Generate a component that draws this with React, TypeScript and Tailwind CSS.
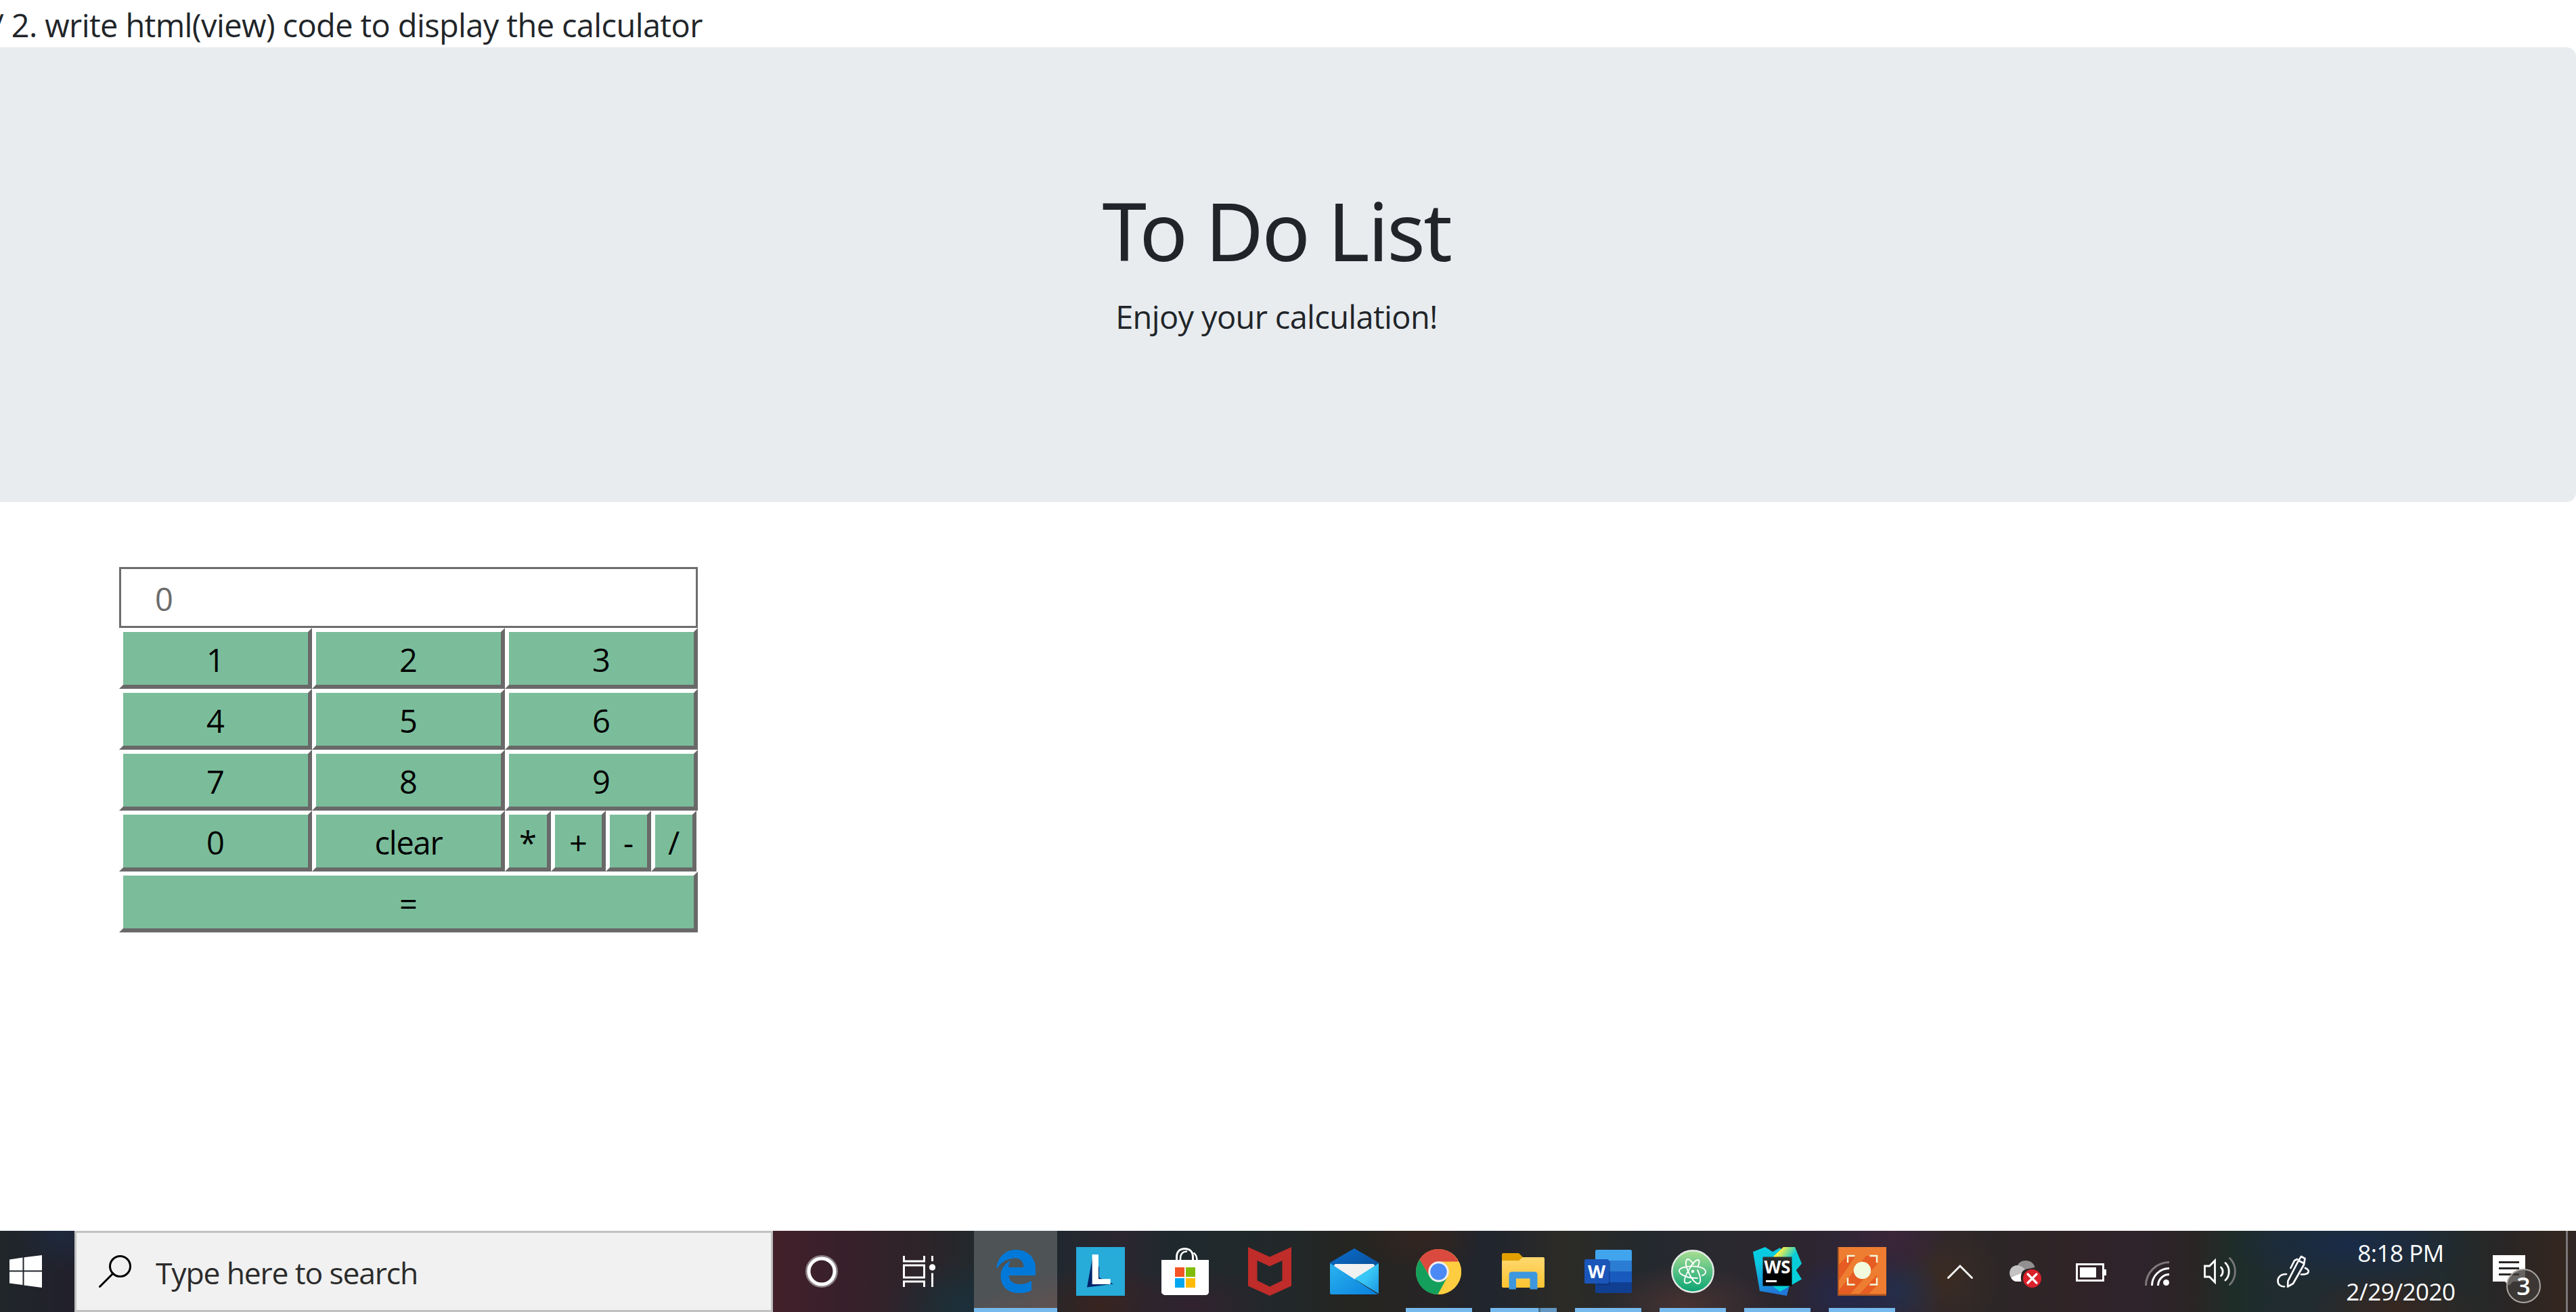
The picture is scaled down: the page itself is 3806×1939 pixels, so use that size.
import type { ReactNode } from "react";

const keyBase =
  "flex h-[90px] items-center justify-center border-[6px] border-t-white border-l-white border-r-[#696969] border-b-[#696969] bg-[#7bbd9b] pt-[4px] text-[47px] leading-none text-black";

function Key({ label, className = "" }: { label: string; className?: string }) {
  return (
    <button type="button" className={`${keyBase} ${className}`}>
      {label}
    </button>
  );
}

function Calculator() {
  return (
    <div className="ml-[176px] mt-24 w-[855px]">
      <div className="flex h-[90px] items-center border-[3px] border-[#6d6d6d] bg-white pl-[50px] pt-[5px] text-[47px] leading-none text-[#6b6b6b]">
        0
      </div>
      <div className="grid grid-cols-3">
        {["1", "2", "3", "4", "5", "6", "7", "8", "9", "0"].map((n) => (
          <Key key={n} label={n} />
        ))}
        <Key label="clear" className="tracking-[-1.2px]" />
        <div className="flex">
          <Key label="*" className="w-[68px]" />
          <Key label="+" className="w-[81px]" />
          <Key label="-" className="w-[67px]" />
          <Key label="/" className="w-[67px]" />
        </div>
      </div>
      <Key label="=" className="w-full" />
    </div>
  );
}

function EdgeIcon() {
  return (
    <svg width="58" height="64" viewBox="0 0 58 64">
      <path
        fill="#0279d9"
        d="M0 28.500C2 11 13 0 29 0C46 0 58 12 58 27V38H18.500C19 46 25 51 35 51C41 51 47 49 52 46V60C46 63 40 64.500 33 64C16 64 6.500 53 6.500 39C6.500 29 12 20 22 16C19 19 18 23 18 26H40.500C40 17 36 12.500 28 12.500C17 12.500 7 18 0 28.500Z"
      />
    </svg>
  );
}

function LenovoIcon() {
  return (
    <svg className="overflow-visible" width="72" height="72" viewBox="0 0 72 72">
      <rect width="72" height="72" fill="#27abd9" />
      <path d="M25 11L34 30V45L55 54.500L16 59.500Z" fill="#00246b" />
      <text x="18.300" y="54.500" fontFamily="Open Sans" fontWeight="700" fontSize="61" fill="#fff">
        L
      </text>
    </svg>
  );
}

function StoreIcon() {
  return (
    <svg width="70" height="70" viewBox="0 0 70 70">
      <g fill="none" stroke="#fff">
        <path strokeWidth="3" d="M22.500 19V14C22.500 6 27 1.500 34.500 1.500C42 1.500 46.500 6 46.500 14V19" />
        <path strokeWidth="2.500" d="M28 19V16C28 9 32 5 38 5.500M47.500 7.500C51 10 52.500 14 52.500 19" />
      </g>
      <path fill="#fff" d="M0 18H70V66Q69 70 65 70H5Q1 69 0 66Z" />
      <rect x="20" y="29" width="14" height="14" fill="#f35325" />
      <rect x="36" y="29" width="14" height="14" fill="#81bc06" />
      <rect x="20" y="45" width="14" height="14" fill="#05a6f0" />
      <rect x="36" y="45" width="14" height="14" fill="#ffba08" />
    </svg>
  );
}

function McAfeeIcon() {
  return (
    <svg width="64" height="72" viewBox="0 0 64 72">
      <path
        fill="#bf2c29"
        fillRule="evenodd"
        d="M0 0L32 14.500L64 0V57.500L32 72L0 57.500ZM13.500 20V49.500L32 58.500L50.500 49.500V20L32 28.500Z"
      />
    </svg>
  );
}

function MailIcon() {
  return (
    <svg width="72" height="68" viewBox="0 0 72 68">
      <defs>
        <linearGradient id="mailTop" x1="0" x2="1" y1="0" y2="1">
          <stop offset="0" stopColor="#0a6fd0" />
          <stop offset="1" stopColor="#0a4d94" />
        </linearGradient>
        <linearGradient id="mailBody" x1="0" x2="1" y1="0" y2="1">
          <stop offset="0" stopColor="#2ab4f0" />
          <stop offset="1" stopColor="#0a80dc" />
        </linearGradient>
        <linearGradient id="mailRight" x1="0" x2="1" y1="0" y2="1">
          <stop offset="0" stopColor="#3fd2fb" />
          <stop offset="0.500" stopColor="#36c4f5" />
          <stop offset="1" stopColor="#1b94e2" />
        </linearGradient>
      </defs>
      <path fill="url(#mailTop)" d="M0 21L36 0L72 21V32H0Z" />
      <path fill="#f1f1f1" d="M6 26Q6 23 9 23H63Q66 23 66 26L40 46H32Z" />
      <path fill="url(#mailRight)" d="M72 22V67L36 45Z" />
      <path fill="url(#mailBody)" d="M0 22L71 68H2Q0 68 0 66Z" />
    </svg>
  );
}

function ChromeIcon() {
  return (
    <svg width="67" height="67" viewBox="0 0 67 67">
      <circle cx="33.500" cy="33.500" r="33.500" fill="#ffcd40" />
      <path fill="#db4a3f" d="M5 16C11 6 21 0 33.500 0C46 0 57 7 63 18.500H33.500L19 38Z" />
      <path fill="#14a05c" d="M5.500 15.500C2 21 0 27 0 33.500C0 52 14 67 32.500 67L46 42L20 40Z" />
      <path fill="#ffcd40" d="M32.500 67L47.500 41L47 19H63.500C66 24 67 28 67 33.500C67 52 52 67 32.500 67Z" />
      <circle cx="33.500" cy="33.500" r="15.200" fill="#f1f1f1" />
      <circle cx="33.500" cy="33.500" r="12.200" fill="#4b8af4" />
    </svg>
  );
}

function FolderIcon() {
  return (
    <svg width="63" height="54" viewBox="0 0 63 54">
      <defs>
        <linearGradient id="folder" x1="0" x2="0" y1="0" y2="1">
          <stop offset="0" stopColor="#ffd86f" />
          <stop offset="1" stopColor="#fdc431" />
        </linearGradient>
      </defs>
      <path fill="#e0a000" d="M0 2Q0 0 2 0H25L31 6V14H0Z" />
      <path fill="url(#folder)" d="M0 11H25L31 6H61Q63 6 63 8V49Q63 51 61 51H2Q0 51 0 49Z" />
      <path fill="#3c97de" d="M10.500 53.500V32Q10.500 27.500 15 27.500H48Q52.500 27.500 52.500 32V53.500H41.500V37.500H21V53.500Z" />
    </svg>
  );
}

function WordIcon() {
  return (
    <svg width="70" height="64" viewBox="0 0 70 64">
      <rect x="16" y="0" width="54" height="64" rx="2.500" fill="#103f91" />
      <path fill="#41a5ee" d="M16 16V2.500Q16 0 18.500 0H67.500Q70 0 70 2.500V16Z" />
      <rect x="16" y="16" width="54" height="16" fill="#2b7cd3" />
      <rect x="16" y="32" width="54" height="16" fill="#185abd" />
      <rect x="18" y="16" width="20" height="37" rx="3" fill="#0b2f70" opacity="0.450" />
      <rect x="0" y="14" width="36" height="36" rx="2.500" fill="#1a55ba" />
      <text x="18" y="41.500" textAnchor="middle" fontFamily="Open Sans" fontWeight="700" fontSize="27" fill="#fff">
        W
      </text>
    </svg>
  );
}

function AtomIcon() {
  return (
    <svg width="64" height="64" viewBox="0 0 64 64">
      <defs>
        <linearGradient id="atom" x1="0" x2="0" y1="0" y2="1">
          <stop offset="0" stopColor="#a9de94" />
          <stop offset="1" stopColor="#08a473" />
        </linearGradient>
      </defs>
      <circle cx="32" cy="32" r="30.700" fill="url(#atom)" stroke="#e6ebe7" strokeWidth="2.400" />
      <g fill="none" stroke="#fff" strokeWidth="1.900" strokeLinecap="round">
        <path d="M39 42C24 42 12 37 12 31C12 23 49 21 51 32C51.500 35 49 37 46 38" />
        <path d="M29 47C26 50 22 50 20 48C18 42 33 14 40 15C43 16 41 21 40 24" />
        <path d="M39 30C45 42 44 50 40 50C32 50 18 22 23 15C26 12 30 17 33 21" />
      </g>
      <circle cx="32" cy="32" r="2.200" fill="#fff" />
    </svg>
  );
}

function WebStormIcon() {
  return (
    <svg width="72" height="72" viewBox="0 0 72 72">
      <defs>
        <linearGradient id="wsA" x1="0" x2="0.300" y1="0" y2="1">
          <stop offset="0" stopColor="#06cfe2" />
          <stop offset="0.350" stopColor="#0bc8e0" />
          <stop offset="1" stopColor="#2078d8" />
        </linearGradient>
        <linearGradient id="wsB" x1="0" x2="1" y1="0.200" y2="0.800">
          <stop offset="0.150" stopColor="#fff045" />
          <stop offset="0.600" stopColor="#08cdd9" />
        </linearGradient>
        <linearGradient id="wsK" x1="0" x2="0" y1="0" y2="1">
          <stop offset="0" stopColor="#333" />
          <stop offset="0.600" stopColor="#000" />
        </linearGradient>
      </defs>
      <path fill="url(#wsA)" d="M0 7L18 0L29 7L40 1L53 14L54 56L50 72L10 65Z" />
      <path fill="#04cfd9" d="M56 14L63 33L72 47.500L40 66L28 57Z" />
      <path fill="url(#wsB)" d="M30 14L45 0H62L72 24.500L63 35L50 30Z" />
      <rect x="14.500" y="14.500" width="43" height="43" fill="url(#wsK)" />
      <text x="36" y="38.500" textAnchor="middle" textLength="39" lengthAdjust="spacingAndGlyphs" fontFamily="Open Sans" fontWeight="700" fontSize="27" fill="#fff">
        WS
      </text>
      <rect x="19" y="49" width="16" height="3" fill="#fff" />
    </svg>
  );
}

function CaptureIcon() {
  return (
    <svg width="72" height="72" viewBox="0 0 72 72">
      <rect width="72" height="72" fill="#ee7d31" />
      <path fill="#e65c22" d="M2 26L14 13H27L2 49ZM42 13H58V26L19 69H2V64ZM33 69L58 41V57L46 69Z" />
      <path fill="#aa5420" d="M0 0H2V69.500H72V72H0Z" />
      <path fill="none" stroke="#f3fadc" strokeWidth="2.400" d="M15 23V13H25.500M47.500 13H58V23M58 45.500V55.500H47.500M25.500 55.500H15V45.500" />
      <circle cx="36.500" cy="34.500" r="12.700" fill="#f1fadd" />
    </svg>
  );
}

function TaskItem({
  children,
  active = false,
  open = false,
  split = false,
}: {
  children: ReactNode;
  active?: boolean;
  open?: boolean;
  split?: boolean;
}) {
  return (
    <div className={`mr-[2px] flex h-[120px] w-[123px] flex-col items-center ${active ? "bg-[linear-gradient(160deg,#4e5356_60%,#625150)]" : ""}`}>
      <div className="flex h-[114px] items-center justify-center pt-[6px]">{children}</div>
      {active && <div className="h-[6px] w-full bg-[#76b9ed]" />}
      {open && !split && <div className="h-[6px] w-[98px] bg-[#76b9ed]" />}
      {split && (
        <div className="flex h-[6px] w-[98px]">
          <div className="w-[71px] bg-[#76b9ed]" />
          <div className="w-[3px] bg-[#47708c]" />
          <div className="w-[24px] bg-[#6197c2]" />
        </div>
      )}
    </div>
  );
}

function Taskbar() {
  return (
    <div className="flex h-[120px] bg-[radial-gradient(ellipse_70px_60px_at_90px_0px,#1d2a3d,transparent),radial-gradient(ellipse_120px_70px_at_1430px_110px,#1b303b,transparent),radial-gradient(ellipse_120px_60px_at_1760px_110px,#32222e,transparent),radial-gradient(ellipse_110px_60px_at_1625px_110px,#38241f,transparent),radial-gradient(ellipse_90px_50px_at_2100px_10px,#33241f,transparent),radial-gradient(ellipse_130px_60px_at_2490px_110px,#483232,transparent),radial-gradient(ellipse_90px_60px_at_2730px_95px,#23284c,transparent),radial-gradient(ellipse_80px_60px_at_2795px_10px,#3b2538,transparent),radial-gradient(ellipse_70px_60px_at_2800px_90px,#242f48,transparent),radial-gradient(ellipse_80px_90px_at_2875px_70px,#3b2c22,transparent),radial-gradient(ellipse_180px_60px_at_3470px_20px,#192b47,transparent),radial-gradient(ellipse_130px_50px_at_3540px_115px,#38271f,transparent),linear-gradient(90deg,#20262a_0px,#22202c_110px,#42202a_1142px,#38202b_1240px,#2c2429_1370px,#22292c_1440px,#20282f_1562px,#2c2630_1660px,#1f292d_1730px,#22282a_1900px,#252521_2000px,#272526_2120px,#20252e_2200px,#2c2b26_2310px,#24292e_2430px,#2a292f_2550px,#2c262e_2640px,#30253a_2780px,#2c2728_2930px,#302427_3050px,#2f232c_3150px,#2a2525_3240px,#1e2d28_3300px,#202c30_3360px,#222b33_3540px,#222b2c_3620px,#292626_3700px,#33261f_3780px,#302624_3806px)]">
      <div className="flex w-[110px] items-center pl-[14px]">
        <svg width="48" height="48" viewBox="0 0 48 48" fill="#fff">
          <path d="M0 6.500L19.500 3.500V22.500H0ZM21.500 3.200L48 0V22.500H21.500ZM0 24.500H19.500V44L0 41.500ZM21.500 24.500H48V48L21.500 44.500Z" />
        </svg>
      </div>
      <div className="flex w-[1032px] items-center border-[3px] border-[#c1c1c1] bg-[#f1f1f1] pl-[33px]">
        <svg width="48" height="48" viewBox="0 0 48 48" fill="none" stroke="#000" strokeWidth="3">
          <circle cx="31.500" cy="16.500" r="15" />
          <path d="M21 27L1.500 46.500" strokeLinecap="round" />
        </svg>
        <span className="ml-[36px] pt-[5px] text-[44.500px] leading-none tracking-[-1.180px] text-[#2b2b2b]">Type here to search</span>
      </div>
      <div className="flex w-[297px] items-center pl-12">
        <svg width="48" height="48" viewBox="0 0 48 48" fill="none">
          <circle cx="24" cy="24" r="22.500" stroke="#8e8388" strokeWidth="3" />
          <circle cx="24" cy="24" r="19" stroke="#fff" strokeWidth="5" />
        </svg>
        <svg className="ml-24" width="48" height="46" viewBox="0 0 48 46" fill="none" stroke="#fff" strokeWidth="3">
          <path d="M1.500 0V8H31.500V0M1.500 46V38H31.500V46M1.500 14H31.500V32H1.500ZM43.500 0V8M43.500 25.500V46" />
          <circle cx="43.500" cy="17" r="4.700" fill="#fff" stroke="none" />
        </svg>
      </div>
      <TaskItem active><EdgeIcon /></TaskItem>
      <TaskItem><LenovoIcon /></TaskItem>
      <TaskItem><StoreIcon /></TaskItem>
      <TaskItem><McAfeeIcon /></TaskItem>
      <TaskItem><MailIcon /></TaskItem>
      <TaskItem open><ChromeIcon /></TaskItem>
      <TaskItem split><FolderIcon /></TaskItem>
      <TaskItem open><WordIcon /></TaskItem>
      <TaskItem open><AtomIcon /></TaskItem>
      <TaskItem open><WebStormIcon /></TaskItem>
      <TaskItem open><CaptureIcon /></TaskItem>
      <div className="ml-[63px] flex w-[535px] items-center">
        <svg width="38" height="21" viewBox="0 0 38 21" fill="none" stroke="#fff" strokeWidth="2.800" strokeLinecap="round">
          <path d="M1.500 19.500L19 2L36.500 19.500" />
        </svg>
        <svg className="mt-2 ml-[53px]" width="48" height="40" viewBox="0 0 48 40">
          <path fill="#929090" d="M12 9C14 3 19 0 25 0C32 0 37 4 38.500 10L20 14Z" />
          <path fill="#c3c3c3" d="M3 25C-2 16 4 7 12 7C18 7 22 11 24 13C20 15 18 20 18 20Z" />
          <path fill="#fff" d="M3 25L19 18.500C17.500 22 17.500 27 18.500 31H12C8 31 5 29 3 25Z" />
          <circle cx="34.500" cy="26.500" r="13.500" fill="#da202b" />
          <path d="M28 20L41 33M41 20L28 33" stroke="#fff" strokeWidth="3.200" strokeLinecap="round" />
        </svg>
        <svg className="mt-[3px] ml-[51px]" width="45" height="27" viewBox="0 0 45 27">
          <rect x="1.500" y="1.500" width="39" height="24" fill="none" stroke="#fff" strokeWidth="3" />
          <rect x="6" y="6" width="24" height="15" fill="#fff" />
          <rect x="42" y="9" width="3" height="9" fill="#fff" />
        </svg>
        <svg className="mt-[6px] ml-[57px]" width="36" height="36" viewBox="0 0 36 36" fill="none" stroke="#fff" strokeWidth="3">
          <path d="M1.500 36A34.500 34.500 0 0 1 36 1.500" stroke="#7f787b" />
          <path d="M10.500 36A25.500 25.500 0 0 1 36 10.500M19.500 36A16.500 16.500 0 0 1 36 19.500" />
          <circle cx="31.500" cy="31.500" r="4.500" fill="#fff" stroke="none" />
        </svg>
        <svg className="ml-[51px]" width="48" height="42" viewBox="0 0 48 42" fill="none" stroke="#fff" strokeWidth="2.800">
          <path d="M1.500 13H8.500L16.500 5V37L8.500 29H1.500Z" />
          <path strokeLinecap="round" d="M25.500 15C29 18 29 24.500 25.500 27.500M32 8.500C39 15 39 27.500 32 34" />
          <path stroke="#77777a" strokeLinecap="round" d="M38.500 1.500C49 12 49 30 38.500 40.500" />
        </svg>
        <svg className="ml-[60px]" width="48" height="48" viewBox="0 0 48 48" fill="none" stroke="#fff" strokeWidth="2.700" strokeLinejoin="round" strokeLinecap="round">
          <path d="M36 2L41.500 5L40 14L24 42L16 46.500L16.500 38L32 8ZM32 8L40 12M30 6L26 8L20.500 19M14 28C5 28 1.500 33 1.500 38C1.500 43 5 46.500 11 46.500M42 19C47 21 47.500 24 46 26C44.500 28.500 40 28.500 36 28.500" />
        </svg>
      </div>
      <div className="ml-[35px] flex w-[200px] flex-col items-center pt-[5px] text-[35px] leading-[56.500px] tracking-[-0.500px] whitespace-nowrap text-white">
        <span>8:18 PM</span>
        <span>2/29/2020</span>
      </div>
      <div className="relative ml-9 mt-9 h-[71px] w-[71px]">
        <svg width="48" height="48" viewBox="0 0 48 48" fill="#fff">
          <path fillRule="evenodd" d="M0 0H48V39H30L24 45L18 39H0ZM9 9V12H39V9ZM9 18V21H39V18ZM9 27V30H39V27Z" />
        </svg>
        <div className="absolute top-5 left-5 flex h-[51px] w-[51px] items-center justify-center rounded-full border-[2px] border-[#aaa6a4] bg-[#403c3a]/80 text-[36px] leading-none font-semibold text-white">
          3
        </div>
      </div>
      <div className="ml-[37px] w-[3px] bg-[#7b7776]" />
    </div>
  );
}

export default function App() {
  return (
    <div className="flex h-[1939px] w-[3806px] flex-col overflow-hidden bg-white font-['Open_Sans','Noto_Sans',sans-serif] text-[#212529]">
      <div className="-ml-7 h-[70px] pt-[2px] text-[47px] leading-[70px] tracking-[-0.630px] whitespace-nowrap">
        {"// 2. write html(view) code to display the calculator"}
      </div>
      <header className="-ml-[34px] h-[672px] rounded-[14px] bg-[#e8ecef] pt-48 text-center">
        <h1 className="pt-[3px] font-['Noto_Sans'] text-[118px] leading-[152px] tracking-[-2.400px]">To Do List</h1>
        <p className="mt-[13px] text-[47px] leading-[76px] tracking-[-0.660px]">Enjoy your calculation!</p>
      </header>
      <main className="flex-1">
        <Calculator />
      </main>
      <Taskbar />
    </div>
  );
}
